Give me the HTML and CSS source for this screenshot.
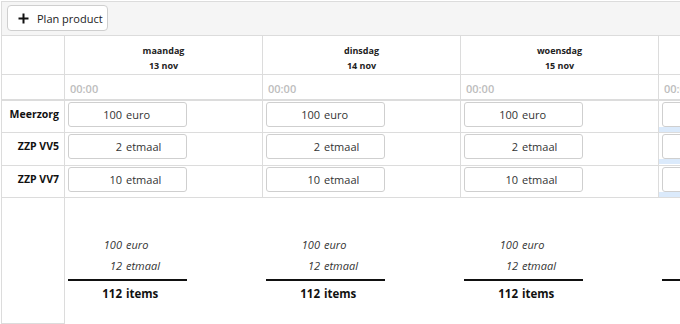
FILE: index.html
```html
<!DOCTYPE html>
<html lang="nl">
<head>
<meta charset="utf-8">
<title>Planning</title>
<link rel="stylesheet" href="styles.css">
</head>
<body>
<div class="app">
  <div class="toolbar">
    <button class="btn" type="button">
      <svg class="btn-icon" width="11" height="11" viewBox="0 0 11 11" aria-hidden="true"><path d="M5.5 0.5v10M0.5 5.5h10" stroke="#111" stroke-width="2" fill="none"/></svg>
      <span>Plan product</span>
    </button>
  </div>
  <div class="grid">
    <div class="cell corner"></div>
    <div class="cell day"><div>maandag</div><div>13 nov</div></div>
    <div class="cell day"><div>dinsdag</div><div>14 nov</div></div>
    <div class="cell day"><div>woensdag</div><div>15 nov</div></div>
    <div class="cell day last"><div>donderdag</div><div>16 nov</div></div>

    <div class="cell corner time-row"></div>
    <div class="cell time time-row">00:00</div>
    <div class="cell time time-row">00:00</div>
    <div class="cell time time-row">00:00</div>
    <div class="cell time time-row last">00:00</div>

    <div class="cell label">Meerzorg</div>
    <div class="cell entry"><div class="field"><span class="num">100</span><span class="unit">euro</span></div></div>
    <div class="cell entry"><div class="field"><span class="num">100</span><span class="unit">euro</span></div></div>
    <div class="cell entry"><div class="field"><span class="num">100</span><span class="unit">euro</span></div></div>
    <div class="cell entry last today"><div class="field"><span class="num">100</span><span class="unit">euro</span></div></div>

    <div class="cell label">ZZP VV5</div>
    <div class="cell entry"><div class="field"><span class="num">2</span><span class="unit">etmaal</span></div></div>
    <div class="cell entry"><div class="field"><span class="num">2</span><span class="unit">etmaal</span></div></div>
    <div class="cell entry"><div class="field"><span class="num">2</span><span class="unit">etmaal</span></div></div>
    <div class="cell entry last today"><div class="field"><span class="num">2</span><span class="unit">etmaal</span></div></div>

    <div class="cell label">ZZP VV7</div>
    <div class="cell entry"><div class="field"><span class="num">10</span><span class="unit">etmaal</span></div></div>
    <div class="cell entry"><div class="field"><span class="num">10</span><span class="unit">etmaal</span></div></div>
    <div class="cell entry"><div class="field"><span class="num">10</span><span class="unit">etmaal</span></div></div>
    <div class="cell entry last today"><div class="field"><span class="num">10</span><span class="unit">etmaal</span></div></div>

    <div class="cell label-empty"></div>
    <div class="total">
      <div class="sum-line"><span class="num">100</span><span class="unit">euro</span></div>
      <div class="sum-line"><span class="num">12</span><span class="unit">etmaal</span></div>
      <div class="sum-rule"></div>
      <div class="sum-total"><span class="num">112</span><span class="unit">items</span></div>
    </div>
    <div class="total">
      <div class="sum-line"><span class="num">100</span><span class="unit">euro</span></div>
      <div class="sum-line"><span class="num">12</span><span class="unit">etmaal</span></div>
      <div class="sum-rule"></div>
      <div class="sum-total"><span class="num">112</span><span class="unit">items</span></div>
    </div>
    <div class="total">
      <div class="sum-line"><span class="num">100</span><span class="unit">euro</span></div>
      <div class="sum-line"><span class="num">12</span><span class="unit">etmaal</span></div>
      <div class="sum-rule"></div>
      <div class="sum-total"><span class="num">112</span><span class="unit">items</span></div>
    </div>
    <div class="total">
      <div class="sum-line"><span class="num">100</span><span class="unit">euro</span></div>
      <div class="sum-line"><span class="num">12</span><span class="unit">etmaal</span></div>
      <div class="sum-rule"></div>
      <div class="sum-total"><span class="num">112</span><span class="unit">items</span></div>
    </div>
  </div>
</div>
</body>
</html>
```

FILE: styles.css
```css
html, body {
  margin: 0;
  padding: 0;
  background: #fff;
}
body {
  font-family: "Open Sans", "Noto Sans", sans-serif;
  color: #222;
  width: 680px;
  height: 324px;
  overflow: hidden;
}
.app {
  margin-top: 1px;
  margin-left: 1px;
  border-top: 1px solid #dcdcdc;
  border-left: 1px solid #dcdcdc;
  width: 678px;
  overflow: hidden;
}
.toolbar {
  height: 34px;
  background: #f5f5f5;
  border-bottom: 1px solid #dcdcdc;
  display: flex;
  align-items: flex-start;
  padding-left: 5px;
  padding-top: 3px;
  box-sizing: border-box;
}
.btn {
  height: 26px;
  width: 101px;
  display: flex;
  align-items: center;
  gap: 8px;
  padding: 0 0 0 10px;
  background: #fff;
  border: 1px solid #cfcfcf;
  border-radius: 4px;
  font-family: inherit;
  font-size: 11px;
  color: #222;
}
.btn-icon {
  display: block;
}
.grid {
  display: grid;
  grid-template-columns: 63px 198px 198px 198px 198px;
  grid-template-rows: 39px 26px 32px 33px 32px 126px;
}
.cell {
  border-right: 1px solid #dcdcdc;
  border-bottom: 1px solid #dcdcdc;
}
.day {
  display: flex;
  flex-direction: column;
  align-items: center;
  justify-content: center;
  gap: 2px;
  padding-top: 5px;
  font-size: 9px;
  font-weight: 700;
  color: #222;
  line-height: 13px;
}
.time-row {
  border-bottom: 2px solid #dcdcdc;
}
.time {
  font-size: 11px;
  font-weight: 600;
  color: #bdbdbd;
  padding: 6px 0 0 5px;
}
.label {
  font-size: 10.5px;
  font-weight: 700;
  color: #111;
  text-align: right;
  padding: 6px 5px 0 0;
}
.label-empty {
  border-right: 1px solid #dcdcdc;
}
.entry {
  padding: 1px 0 0 3px;
}
.today {
  background: linear-gradient(to bottom, transparent 26px, #dbeafb 26px, #dbeafb 31px, transparent 31px);
}
.field {
  width: 117px;
  height: 23px;
  border: 1px solid #cfcfcf;
  border-radius: 3px;
  background: #fff;
  display: flex;
  align-items: center;
  font-size: 11px;
  color: #333;
}
.num {
  text-align: right;
  padding-right: 4px;
  box-sizing: border-box;
}
.field .num {
  width: 57px;
}
.total {
  padding: 36px 0 0 3px;
  font-size: 11px;
  color: #333;
}
.sum-line {
  display: flex;
  height: 21px;
  align-items: center;
  font-style: italic;
  width: 119px;
}
.sum-line .num {
  width: 58px;
}
.sum-rule {
  width: 119px;
  height: 2px;
  background: #111;
  margin-top: 3px;
}
.sum-total {
  display: flex;
  width: 119px;
  height: 24px;
  align-items: center;
  font-size: 11.5px;
  font-weight: 700;
  color: #111;
}
.sum-total .num {
  width: 58px;
}
```
